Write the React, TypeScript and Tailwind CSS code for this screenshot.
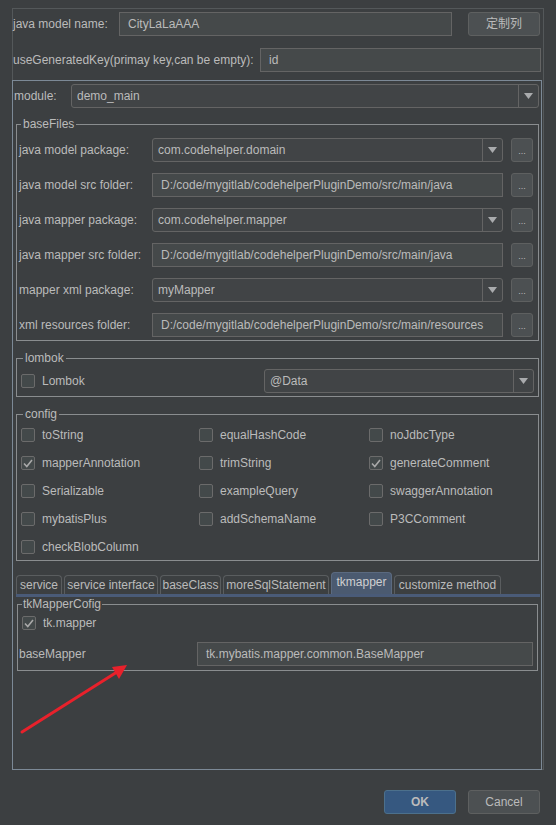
import React from "react"

function TextBox({ value, className = "" }: { value: string; className?: string }) {
  return (
    <div className={`h-[24px] flex items-center px-[8px] bg-[#45494a] border border-[#646464] whitespace-nowrap overflow-hidden ${className}`}>
      {value}
    </div>
  )
}

function Combo({ value, className = "" }: { value: string; className?: string }) {
  return (
    <div className={`h-[24px] flex bg-[#414446] border border-[#646464] rounded-[3px] ${className}`}>
      <div className="flex-1 flex items-center px-[5px] whitespace-nowrap">{value}</div>
      <div className="w-[20px] border-l border-[#646464] flex items-center justify-center">
        <svg width="9" height="6" viewBox="0 0 9 6">
          <path d="M0 0h9L4.5 6z" fill="#a9abad" />
        </svg>
      </div>
    </div>
  )
}

function Dots() {
  return (
    <div className="w-[22px] h-[24px] ml-[8px] bg-[#4c5052] border border-[#5e6060] rounded-[3px] flex items-end justify-center pb-[5px] text-[9px] leading-none text-[#bbbbbb]">
      ...
    </div>
  )
}

function Check({ checked = false }: { checked?: boolean }) {
  return (
    <span className="w-[14px] h-[14px] shrink-0 rounded-[2px] border border-[#6b6b6b] bg-[#43494a] flex items-center justify-center">
      {checked && (
        <svg width="10" height="9" viewBox="0 0 10 9">
          <path d="M1 4.5l2.8 3L9 1" stroke="#a9a9a9" strokeWidth="1.6" fill="none" />
        </svg>
      )}
    </span>
  )
}

function CheckItem({ label, checked }: { label: string; checked?: boolean }) {
  return (
    <div className="h-[20px] flex items-center gap-[7px]">
      <Check checked={checked} />
      <span>{label}</span>
    </div>
  )
}

const baseRows = [
  { label: "java model package:", value: "com.codehelper.domain", combo: true },
  { label: "java model src folder:", value: "D:/code/mygitlab/codehelperPluginDemo/src/main/java", combo: false },
  { label: "java mapper package:", value: "com.codehelper.mapper", combo: true },
  { label: "java mapper src folder:", value: "D:/code/mygitlab/codehelperPluginDemo/src/main/java", combo: false },
  { label: "mapper xml package:", value: "myMapper", combo: true },
  { label: "xml resources folder:", value: "D:/code/mygitlab/codehelperPluginDemo/src/main/resources", combo: false },
]

const configItems = [
  ["toString", false], ["equalHashCode", false], ["noJdbcType", false],
  ["mapperAnnotation", true], ["trimString", false], ["generateComment", true],
  ["Serializable", false], ["exampleQuery", false], ["swaggerAnnotation", false],
  ["mybatisPlus", false], ["addSchemaName", false], ["P3CComment", false],
  ["checkBlobColumn", false],
] as const

const tabs = [
  { label: "service", w: "w-[46px]" },
  { label: "service interface", w: "w-[94px]" },
  { label: "baseClass", w: "w-[61px]" },
  { label: "moreSqlStatement", w: "w-[106px]" },
  { label: "tkmapper", w: "w-[61px]", active: true },
  { label: "customize method", w: "w-[107px]" },
]

export default function App() {
  return (
    <div className="relative w-[556px] h-[825px] bg-[#3c3f41] pt-[8px] pl-[12px] text-[12px] leading-[14px] text-[#bbbbbb] font-['Liberation_Sans','Noto_Sans_CJK_SC',sans-serif]">
      {/* main panel */}
      <div className="w-[532px] h-[762px] border border-[#54585a] flex flex-col">
        <div className="mt-[3px] h-[24px] flex items-center pr-[2px]">
          <span className="w-[106px]">java model name:</span>
          <TextBox value="CityLaLaAAA" className="w-[333px]" />
          <div className="ml-[16px] w-[72px] h-[24px] bg-[#4c5052] border border-[#5e6060] rounded-[3px] flex items-center justify-center">
            定制列
          </div>
        </div>
        <div className="mt-[12px] h-[24px] flex items-center pr-[2px]">
          <span className="w-[247px]">useGeneratedKey(primay key,can be empty):</span>
          <TextBox value="id" className="flex-1" />
        </div>

        {/* module panel */}
        <div className="mt-[8px] -ml-px mr-px -mb-px flex-1 border border-[#7c8996] flex flex-col">
          <div className="mt-[3px] h-[24px] flex items-center pl-[1px] pr-[2px]">
            <span className="w-[57px]">module:</span>
            <Combo value="demo_main" className="flex-1" />
          </div>

          <fieldset className="mt-[9px] ml-[3px] mr-[2px] border border-[#8a8d8f] pl-[2px] pr-[5px] pb-[3px]">
            <legend className="ml-[2px] px-[2px]">baseFiles</legend>
            <div className="mt-[7px] flex flex-col gap-[11px]">
              {baseRows.map((r) => (
                <div key={r.label} className="h-[24px] flex items-center">
                  <span className="w-[133px]">{r.label}</span>
                  {r.combo ? (
                    <Combo value={r.value} className="w-[351px]" />
                  ) : (
                    <TextBox value={r.value} className="w-[351px]" />
                  )}
                  <Dots />
                </div>
              ))}
            </div>
          </fieldset>

          <fieldset className="mt-[10px] ml-[3px] mr-[2px] border border-[#8a8d8f] pl-[4px] pr-[4px] pb-[3px]">
            <legend className="ml-[2px] px-[2px]">lombok</legend>
            <div className="mt-[4px] h-[24px] flex items-center">
              <div className="w-[243px] flex items-center gap-[7px]">
                <Check />
                <span>Lombok</span>
              </div>
              <Combo value="@Data" className="flex-1" />
            </div>
          </fieldset>

          <fieldset className="mt-[10px] ml-[3px] mr-[2px] border border-[#8a8d8f] pl-[4px] pb-[3px]">
            <legend className="ml-[2px] px-[2px]">config</legend>
            <div className="mt-[4px] grid grid-cols-[178px_170px_1fr] gap-y-[8px]">
              {configItems.map(([label, checked]) => (
                <CheckItem key={label} label={label} checked={checked} />
              ))}
            </div>
          </fieldset>

          {/* tabs */}
          <div className="mt-[11px] ml-[3px] mr-[1px] flex items-end gap-[2px] border-b-[3px] border-[#4a5b78]">
            {tabs.map((t) =>
              t.active ? (
                <div key={t.label} className={`${t.w} h-[22px] rounded-t-[4px] bg-[#4b5a70] border border-b-0 border-[#5b6a80] flex items-center justify-center text-[#d0d0d0] pb-[3px]`}>
                  {t.label}
                </div>
              ) : (
                <div key={t.label} className={`${t.w} h-[19px] rounded-t-[4px] bg-[#3c3f41] border border-b-0 border-[#5a5d5f] flex items-center justify-center`}>
                  {t.label}
                </div>
              )
            )}
          </div>

          <fieldset className="ml-[4px] mr-[3px] border border-[#8a8d8f] pl-[1px] pr-[4px] pb-[4px]">
            <legend className="ml-[3px] px-[1px]">tkMapperCofig</legend>
            <div className="mt-[2px] ml-[3px] h-[20px] flex items-center gap-[7px]">
              <Check checked />
              <span>tk.mapper</span>
            </div>
            <div className="mt-[9px] h-[24px] flex items-center">
              <span className="w-[178px]">baseMapper</span>
              <TextBox value="tk.mybatis.mapper.common.BaseMapper" className="flex-1" />
            </div>
          </fieldset>
        </div>
      </div>

      {/* dialog buttons */}
      <div className="mt-[20px] w-[528px] flex justify-end gap-[12px]">
        <div className="w-[72px] h-[24px] bg-[#365880] border border-[#4c708c] rounded-[3px] flex items-center justify-center font-bold">
          OK
        </div>
        <div className="w-[72px] h-[24px] bg-[#4c5052] border border-[#5e6060] rounded-[3px] flex items-center justify-center">
          Cancel
        </div>
      </div>

      {/* annotation arrow */}
      <svg className="absolute left-0 top-0 pointer-events-none" width="556" height="825" viewBox="0 0 556 825">
        <line x1="22" y1="732" x2="117" y2="672" stroke="#e8212b" strokeWidth="3" strokeLinecap="round" />
        <polygon points="127,665 112,667 119,679" fill="#e8212b" />
      </svg>
    </div>
  )
}
